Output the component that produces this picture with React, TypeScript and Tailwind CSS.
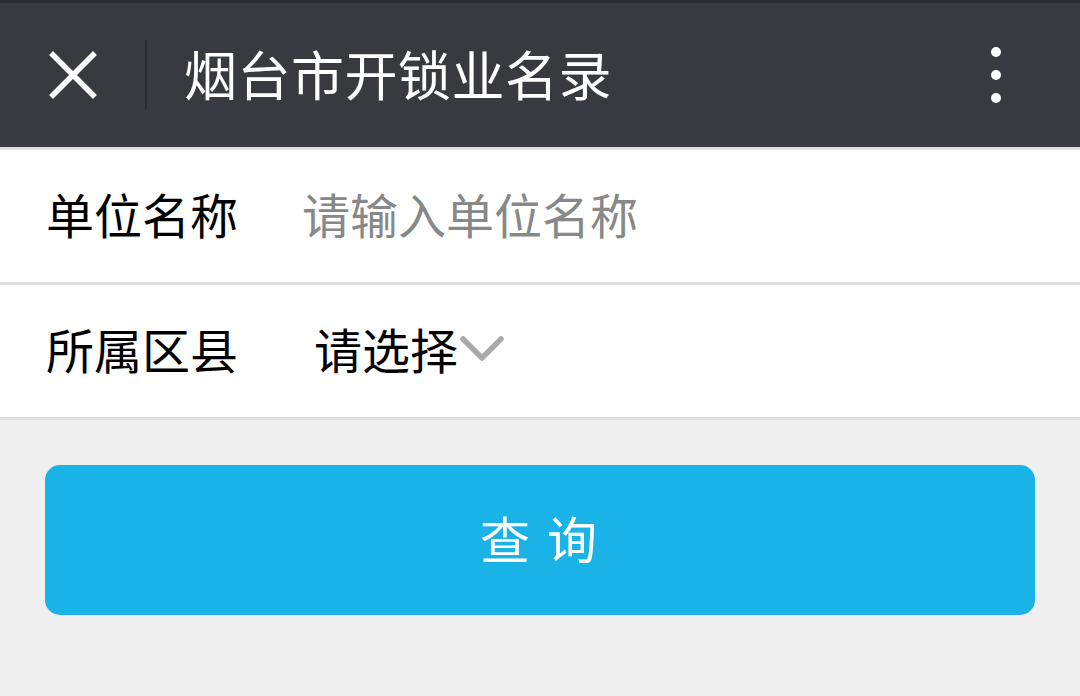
import { useState } from "react";

const FONT = "font-['Noto_Sans_CJK_SC','Noto_Sans',sans-serif]";

function CloseIcon() {
  return (
    <svg width="48" height="48" viewBox="0 0 48 48" className="block">
      <path d="M4 4 L44 44 M44 4 L4 44" stroke="#fff" strokeWidth="5.5" strokeLinecap="square" />
    </svg>
  );
}

function MoreIcon() {
  return (
    <div className="flex flex-col items-center gap-[13px]">
      <span className="block w-[10px] h-[10px] rounded-full bg-white" />
      <span className="block w-[10px] h-[10px] rounded-full bg-white" />
      <span className="block w-[10px] h-[10px] rounded-full bg-white" />
    </div>
  );
}

function Chevron() {
  return (
    <svg width="46" height="30" viewBox="0 0 46 30" className="block">
      <path d="M4 5 L23 24 L42 5" fill="none" stroke="#a9a9a9" strokeWidth="5.5" strokeLinecap="round" strokeLinejoin="round" />
    </svg>
  );
}

export default function App() {
  const [name, setName] = useState("");

  return (
    <div className={`w-[1080px] h-[696px] bg-[#efefef] ${FONT} overflow-hidden`}>
      {/* Title bar */}
      <div className="h-[147px] bg-[#393a3f] border-t-[3px] border-[#2b2c30] flex items-center">
        <div className="w-[145px] flex justify-center pl-[1px]">
          <CloseIcon />
        </div>
        <div className="w-[2px] h-[70px] bg-[#2c2d31]" />
        <div className="flex-1 pl-[37px] pb-[3px] text-white text-[53px] leading-none tracking-[0.5px]">烟台市开锁业名录</div>
        <div className="w-[60px] mr-[54px] flex justify-center">
          <MoreIcon />
        </div>
      </div>

      {/* Form */}
      <div className="bg-white border-t-[3px] border-[#e0e0e0]">
        <div className="h-[135px] flex items-center pl-[46px] pb-[6px] border-b-[3px] border-[#dedede]">
          <label className="w-[256px] text-[48px] leading-none text-black">单位名称</label>
          <input
            value={name}
            onChange={(e) => setName(e.target.value)}
            placeholder="请输入单位名称"
            className="flex-1 bg-transparent outline-none text-[48px] leading-none text-black placeholder:text-[#888888]"
          />
        </div>
        <div className="h-[135px] flex items-center pl-[46px] pb-[6px] border-b-[3px] border-[#dedede]">
          <label className="w-[268px] text-[48px] leading-none text-black">所属区县</label>
          <div className="flex items-center">
            <span className="text-[48px] leading-none text-black">请选择</span>
            <span className="ml-[1px] mt-[2px]">
              <Chevron />
            </span>
          </div>
        </div>
      </div>

      {/* Query button */}
      <div className="px-[45px] pt-[45px]">
        <button className="w-full h-[150px] pb-[6px] rounded-[15px] bg-[#1ab3e8] text-white text-[50px] leading-none tracking-[3px]">
          查 询
        </button>
      </div>
    </div>
  );
}
